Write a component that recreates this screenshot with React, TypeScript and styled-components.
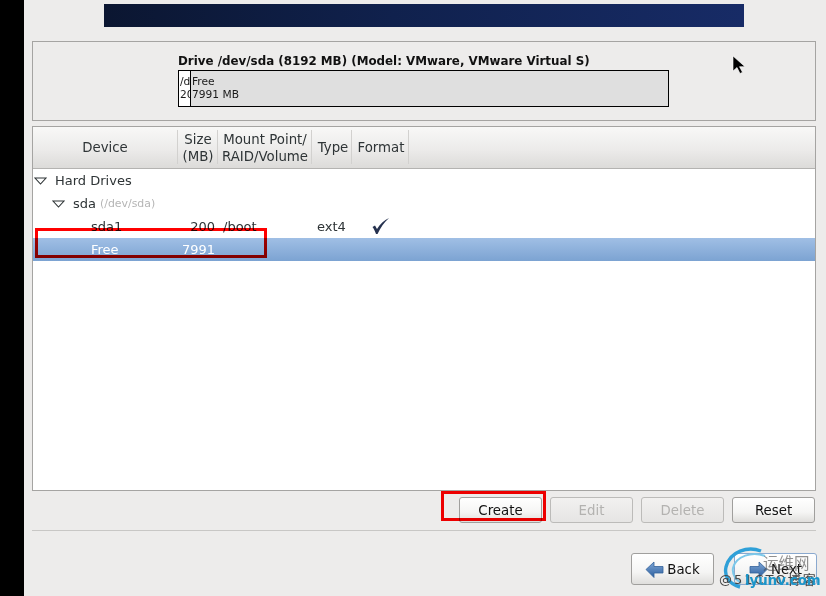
import React from "react";
import styled, { createGlobalStyle } from "styled-components";

const Global = createGlobalStyle`
  html, body { margin: 0; padding: 0; background: #edeceb; }
  body { width: 826px; height: 596px; overflow: hidden; font-family: "DejaVu Sans", sans-serif; }
`;

const Screen = styled.div`
  position: relative;
  display: flex;
  width: 826px;
  height: 596px;
  overflow: hidden;
  background: #edeceb;
`;
const Strip = styled.div`
  width: 24px;
  flex: none;
  background: #000;
`;
const Main = styled.div`
  flex: 1;
  display: flex;
  flex-direction: column;
  padding: 4px 10px 0 8px;
  min-width: 0;
`;
const Banner = styled.div`
  width: 640px;
  height: 23px;
  margin-left: 72px;
  background: linear-gradient(90deg, #0b1631 0%, #10214d 45%, #172b66 100%);
`;
const DrivePanel = styled.section`
  box-sizing: border-box;
  height: 80px;
  margin-top: 14px;
  border: 1px solid #a5a4a2;
  padding: 12px 0 0 145px;
`;
const DriveTitle = styled.div`
  font-size: 11.87px;
  font-weight: 700;
  line-height: 14px;
  color: #111;
  white-space: nowrap;
`;
const DiskBar = styled.div`
  box-sizing: border-box;
  display: flex;
  width: 491px;
  height: 37px;
  margin-top: 2px;
  border: 1px solid #000;
  font-size: 10.67px;
  line-height: 13px;
  color: #1a1a1a;
`;
const DiskSegment = styled.div<{ $width?: number; $free?: boolean }>`
  box-sizing: border-box;
  ${(p) => (p.$width ? `width: ${p.$width}px; flex: none;` : "flex: 1;")}
  background: ${(p) => (p.$free ? "#dfdfdf" : "#fff")};
  border-left: ${(p) => (p.$free ? "1px solid #000" : "none")};
  padding: 4px 0 0 1px;
  overflow: hidden;
  white-space: nowrap;
`;
const TreePanel = styled.section`
  box-sizing: border-box;
  height: 365px;
  margin-top: 5px;
  border: 1px solid #a5a4a2;
  background: #fff;
  display: flex;
  flex-direction: column;
`;
const Header = styled.div`
  display: flex;
  height: 42px;
  flex: none;
  box-sizing: border-box;
  border-bottom: 1px solid #b4b3b1;
  background: linear-gradient(180deg, #f8f8f7 0%, #ecebea 55%, #dcdbd9 100%);
`;
const HeaderCell = styled.div<{ $width: number; $shift?: number; $two?: boolean }>`
  box-sizing: border-box;
  width: ${(p) => p.$width}px;
  flex: none;
  display: flex;
  align-items: center;
  justify-content: center;
  margin: 3px 0 4px;
  padding-left: ${(p) => p.$shift ?? 0}px;
  padding-top: ${(p) => (p.$two ? 2 : 0)}px;
  border-right: 1px solid #d2d1cf;
  font-size: 13.33px;
  line-height: 17px;
  color: #2e3436;
  text-align: center;
`;
const Rows = styled.div`
  display: flex;
  flex-direction: column;
`;
const Row = styled.div<{ $selected?: boolean }>`
  display: flex;
  align-items: center;
  height: 23px;
  font-size: 13px;
  color: ${(p) => (p.$selected ? "#fff" : "#2e3436")};
  background: ${(p) => (p.$selected ? "linear-gradient(180deg, #a0bfe5 0%, #7ca3d2 100%)" : "transparent")};
`;
const TreeLabel = styled.div<{ $indent: number }>`
  box-sizing: border-box;
  width: 145px;
  flex: none;
  padding-left: ${(p) => p.$indent}px;
  display: flex;
  align-items: center;
  white-space: nowrap;
`;
const Expander = styled.svg`
  width: 13px;
  height: 8px;
  flex: none;
  margin-right: 8px;
`;
const Muted = styled.span`
  font-size: 10.9px;
  color: #b5b5b5;
  margin-left: 4px;
`;
const SizeCell = styled.div`
  box-sizing: border-box;
  width: 37px;
  flex: none;
  text-align: right;
`;
const MountCell = styled.div`
  box-sizing: border-box;
  width: 97px;
  flex: none;
  padding-left: 8px;
`;
const TypeCell = styled.div`
  width: 60px;
  flex: none;
  padding-left: 5px;
  box-sizing: border-box;
`;
const Check = styled.svg`
  width: 18px;
  height: 18px;
  flex: none;
  margin-top: -1px;
`;
const ActionBar = styled.div`
  display: flex;
  justify-content: flex-end;
  gap: 8px;
  margin-top: 6px;
  padding-right: 1px;
`;
const Button = styled.button<{ $tall?: boolean; $hot?: boolean }>`
  box-sizing: border-box;
  width: 83px;
  height: ${(p) => (p.$tall ? 32 : 26)}px;
  padding: 0;
  display: inline-flex;
  align-items: center;
  justify-content: center;
  gap: 3px;
  border: 1px solid ${(p) => (p.$hot ? "#8aa9cf" : "#a09f9d")};
  border-radius: 3px;
  background: linear-gradient(180deg, #ffffff 0%, #f5f5f4 60%, #dfdedc 100%);
  font: 13.33px "DejaVu Sans", sans-serif;
  color: #111;
  &:disabled {
    color: #b3b2b0;
    background: linear-gradient(180deg, #f2f1f0 0%, #e6e5e4 100%);
    border-color: #bcbbb9;
  }
`;
const Separator = styled.div`
  height: 1px;
  margin-top: 7px;
  background: #c8c7c5;
`;
const NavBar = styled.div`
  display: flex;
  justify-content: flex-end;
  gap: 20px;
  margin-top: 22px;
  margin-right: -1px;
`;
const RedBox = styled.div<{ $x: number; $y: number; $w: number; $h: number }>`
  position: absolute;
  box-sizing: border-box;
  left: ${(p) => p.$x}px;
  top: ${(p) => p.$y}px;
  width: ${(p) => p.$w}px;
  height: ${(p) => p.$h}px;
  border: 3px solid #ff0000;
  mix-blend-mode: multiply;
`;
const Cursor = styled.svg`
  position: absolute;
  left: 732px;
  top: 55px;
  width: 14px;
  height: 20px;
`;
const Mark = styled.div`
  position: absolute;
  left: 718px;
  top: 547px;
  width: 108px;
  height: 49px;
`;
const MarkRing = styled.svg`
  position: absolute;
  left: 0;
  top: 0;
  width: 60px;
  height: 47px;
`;
const MarkCn = styled.span`
  position: absolute;
  left: 45px;
  top: 6px;
  font: 15.5px "Noto Sans CJK SC", sans-serif;
  line-height: 18px;
  color: rgba(70, 70, 70, 0.6);
`;
const MarkBlog = styled.span`
  position: absolute;
  left: 1px;
  top: 24px;
  font: 13px "DejaVu Sans", "Noto Sans CJK SC", sans-serif;
  line-height: 18px;
  color: #444;
  white-space: nowrap;
  letter-spacing: 2px;
`;
const MarkSite = styled.span`
  position: absolute;
  left: 27px;
  top: 25px;
  font: 700 13.3px "DejaVu Sans", sans-serif;
  line-height: 18px;
  color: #1b95c9;
  white-space: nowrap;
`;

const Arrow = ({ flip }: { flip?: boolean }) => (
  <svg width="19" height="19" viewBox="0 0 19 19" style={flip ? { transform: "scaleX(-1)" } : undefined}>
    <defs>
      <linearGradient id={flip ? "an" : "ab"} x1="0" y1="0" x2="0" y2="1">
        <stop offset="0" stopColor="#7ea6d6" />
        <stop offset="1" stopColor="#2c5f9e" />
      </linearGradient>
    </defs>
    <path d="M1 9.5 9 2v4.5h9v6.5H9v4.5z" fill={`url(#${flip ? "an" : "ab"})`} stroke="#34629b" strokeWidth="0.8" />
  </svg>
);

const Triangle = () => (
  <Expander viewBox="0 0 13 8">
    <path d="M1 1h11L6.5 7z" fill="none" stroke="#2e3436" strokeWidth="1.1" />
  </Expander>
);

export default function App() {
  return (
    <Screen>
      <Global />
      <Strip />
      <Main>
        <Banner />
        <DrivePanel>
          <DriveTitle>Drive /dev/sda (8192 MB) (Model: VMware, VMware Virtual S)</DriveTitle>
          <DiskBar>
            <DiskSegment $width={11}>/dev/sda1<br />200 MB</DiskSegment>
            <DiskSegment $free>Free<br />7991 MB</DiskSegment>
          </DiskBar>
        </DrivePanel>
        <TreePanel>
          <Header>
            <HeaderCell $width={145}>Device</HeaderCell>
            <HeaderCell $width={40} $shift={1} $two>Size<br />(MB)</HeaderCell>
            <HeaderCell $width={94} $shift={1} $two>Mount Point/<br />RAID/Volume</HeaderCell>
            <HeaderCell $width={40} $shift={3}>Type</HeaderCell>
            <HeaderCell $width={57} $shift={2}>Format</HeaderCell>
          </Header>
          <Rows>
            <Row><TreeLabel $indent={1}><Triangle />Hard Drives</TreeLabel></Row>
            <Row><TreeLabel $indent={19}><Triangle />sda<Muted>(/dev/sda)</Muted></TreeLabel></Row>
            <Row>
              <TreeLabel $indent={58}>sda1</TreeLabel>
              <SizeCell>200</SizeCell>
              <MountCell>/boot</MountCell>
              <TypeCell>ext4</TypeCell>
              <Check viewBox="0 0 18 18">
                <path d="M0.5 10 3 8.5 5 12C8 7 12 3.5 17 1 12 5.5 8.5 10.5 5.5 17H4C3 14 2 12 .5 10z" fill="#26324f" />
              </Check>
            </Row>
            <Row $selected>
              <TreeLabel $indent={58}>Free</TreeLabel>
              <SizeCell>7991</SizeCell>
            </Row>
          </Rows>
        </TreePanel>
        <ActionBar>
          <Button>Create</Button>
          <Button disabled>Edit</Button>
          <Button disabled>Delete</Button>
          <Button>Reset</Button>
        </ActionBar>
        <Separator />
        <NavBar>
          <Button $tall><Arrow />Back</Button>
          <Button $tall $hot><Arrow flip />Next</Button>
        </NavBar>
      </Main>
      <RedBox $x={35} $y={228} $w={232} $h={30} />
      <RedBox $x={441} $y={491} $w={105} $h={30} />
      <Cursor viewBox="0 0 14 20">
        <path d="M1 1v15l4-3.5 3 6 2.5-1.2-3-5.6H13z" fill="#000" stroke="#fff" strokeWidth="0.6" />
      </Cursor>
      <Mark>
        <MarkRing viewBox="0 0 60 47">
          <path d="M43 4C30-1 12 4 8 20c-2 9 3 17 14 20" fill="none" stroke="#2fa0d8" strokeWidth="3.4" />
          <path d="M47 9C34 4 18 9 15 21c-1 6 2 11 8 15" fill="none" stroke="#7cc8ea" strokeWidth="2" />
        </MarkRing>
        <MarkCn>运维网</MarkCn>
        <MarkBlog>@51CTO博客</MarkBlog>
        <MarkSite>lyunv.com</MarkSite>
      </Mark>
    </Screen>
  );
}
